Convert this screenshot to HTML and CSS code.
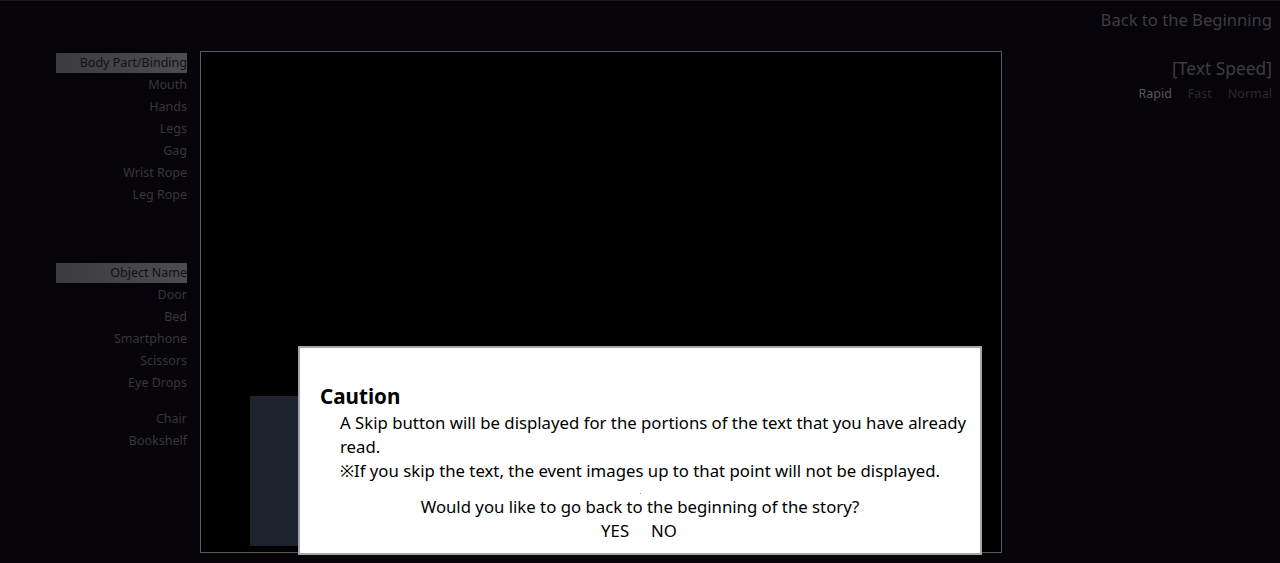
FILE: index.html
```html
<!DOCTYPE html>
<html>
<head>
<meta charset="utf-8">
<link rel="stylesheet" href="styles.css">
</head>
<body>
<div class="page">
  <nav class="sidebar">
    <div class="group">
      <div class="head">Body Part/Binding</div>
      <div class="item">Mouth</div>
      <div class="item">Hands</div>
      <div class="item">Legs</div>
      <div class="item">Gag</div>
      <div class="item">Wrist Rope</div>
      <div class="item">Leg Rope</div>
    </div>
    <div class="group group2">
      <div class="head">Object Name</div>
      <div class="item">Door</div>
      <div class="item">Bed</div>
      <div class="item">Smartphone</div>
      <div class="item">Scissors</div>
      <div class="item">Eye Drops</div>
      <div class="item gap">Chair</div>
      <div class="item">Bookshelf</div>
    </div>
  </nav>
  <div class="frame">
    <div class="panel"></div>
  </div>
  <aside class="right">
    <div class="back">Back to the Beginning</div>
    <div class="speed-title">[Text Speed]</div>
    <div class="speeds"><span class="on">Rapid</span><span>Fast</span><span>Normal</span></div>
  </aside>
</div>
<div class="modal">
  <h2 class="title">Caution</h2>
  <div class="body">
    <p>A Skip button will be displayed for the portions of the text that you have already read.</p>
    <p>※If you skip the text, the event images up to that point will not be displayed.</p>
  </div>
  <div class="question">Would you like to go back to the beginning of the story?</div>
  <div class="buttons"><span>YES</span><span>NO</span></div>
  <span class="dot"></span>
</div>
</body>
</html>
```
FILE: styles.css
```css
html, body {
  margin: 0;
  padding: 0;
}
body {
  background: #060408;
  border-top: 1px solid #17161a;
  height: 562px;
  overflow: hidden;
  font-family: "Noto Sans", "Noto Sans CJK JP", sans-serif;
  position: relative;
}
.page {
  display: flex;
  align-items: flex-start;
}
.sidebar {
  width: 131px;
  margin-left: 56px;
  padding-top: 52px;
  font-size: 12.5px;
  text-align: right;
}
.head {
  height: 20px;
  line-height: 20px;
  background: linear-gradient(to right, #3c3b3e, #4d4c4f);
  color: #121114;
}
.item {
  height: 22px;
  line-height: 22px;
  color: #38373a;
}
.group .head + .item {
  margin-top: 1px;
}
.group2 {
  margin-top: 57px;
}
.item.gap {
  margin-top: 14px;
}
.frame {
  margin-left: 13px;
  margin-top: 50px;
  width: 800px;
  height: 500px;
  border: 1px solid #5a595c;
  background: #000;
  position: relative;
}
.panel {
  position: absolute;
  left: 49px;
  top: 344px;
  width: 120px;
  height: 150px;
  background: #1e2330;
}
.right {
  flex: 1;
  text-align: right;
  padding-right: 8px;
  padding-top: 8px;
}
.back {
  font-size: 16.6px;
  line-height: 22px;
  color: #3e3d40;
}
.speed-title {
  margin-top: 26px;
  font-size: 17.4px;
  line-height: 22px;
  color: #3e3d40;
}
.speeds {
  margin-top: 7px;
  font-size: 12.5px;
  line-height: 16px;
  display: flex;
  justify-content: flex-end;
  gap: 16px;
  color: #2a292c;
}
.speeds .on {
  color: #58575a;
}
.modal {
  position: absolute;
  left: 298px;
  top: 345px;
  width: 680px;
  height: 205px;
  background: #fff;
  border: 2px solid #a6a6a6;
  color: #000;
}
.title {
  margin: 36px 0 0 20px;
  font-size: 20.6px;
  line-height: 24px;
  font-weight: bold;
}
.body {
  margin: 3px 0 0 40px;
  font-size: 16.75px;
  line-height: 24px;
}
.body p {
  margin: 0;
}
.question {
  margin-top: 12px;
  text-align: center;
  font-size: 16.75px;
  line-height: 24px;
}
.buttons {
  display: flex;
  justify-content: center;
  gap: 22px;
  font-size: 16.75px;
  line-height: 24px;
}
.buttons span:first-child {
  margin-left: -2px;
}
.dot {
  position: absolute;
  left: 340px;
  top: 145px;
  width: 1px;
  height: 1px;
  background: #999;
}
```
